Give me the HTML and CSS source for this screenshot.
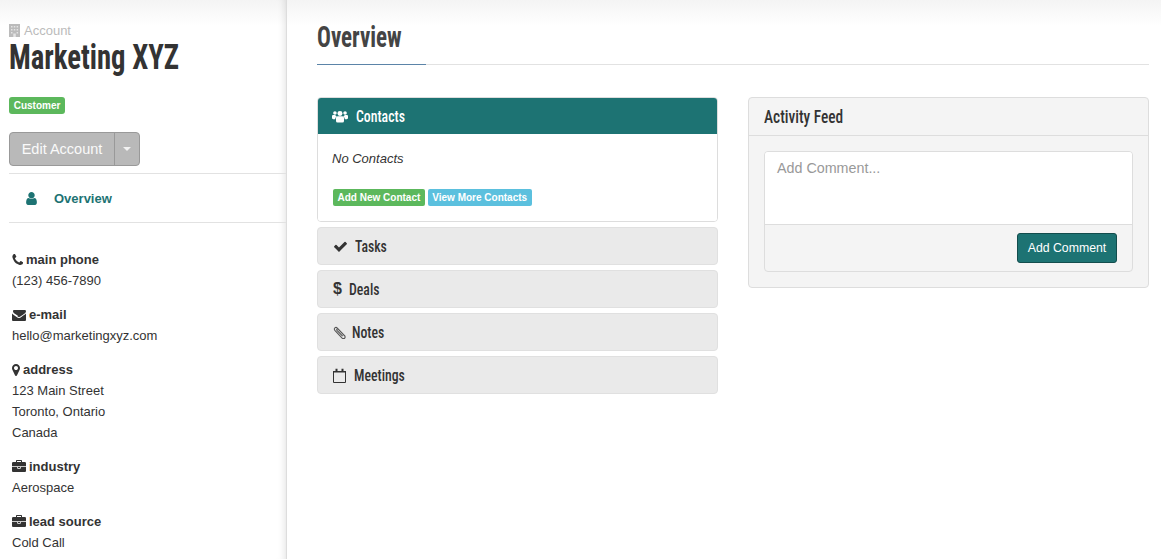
FILE: index.html
```html
<!DOCTYPE html>
<html lang="en">
<head>
<meta charset="utf-8">
<title>Marketing XYZ</title>
<link rel="stylesheet" href="styles.css">
</head>
<body>
<div class="page">
  <aside class="sidebar">
    <div class="account-head">
      <div class="account-label">
        <svg class="ico-building" viewBox="0 0 11 13"><path fill="#bbb" d="M0 0h11v13H0z"/><path fill="#e4e4e4" d="M2 2h1.500v1.500H2zM4.800 2h1.500v1.500H4.800zM7.600 2h1.500v1.500H7.600zM2 5h1.500v1.500H2zM4.800 5h1.500v1.500H4.800zM7.600 5h1.500v1.500H7.600zM2 8h1.500v1.500H2zM7.600 8h1.500v1.500H7.600zM4.300 9.500h2.500V13H4.300z"/></svg>
        <span>Account</span>
      </div>
      <h1 class="account-name"><span class="cond">Marketing XYZ</span></h1>
      <span class="badge">Customer</span>
      <div class="btn-group">
        <span class="btn-edit">Edit Account</span>
        <span class="btn-caret"><i class="caret"></i></span>
      </div>
    </div>
    <nav class="side-nav">
      <svg class="ico-user" viewBox="0 0 1408 1792"><path fill="currentColor" d="M1408 1399q0 109-62.500 187t-150.500 78H341q-88 0-150.500-78T128 1399q0-85 8.500-160.500t31.500-152 58.500-131 94-89T455 832q131 128 313 128t313-128q76 0 134.500 34.500t94 89 58.500 131 31.500 152 8.500 160.500zM1152 512q0 159-112.500 271.500T768 896 496.500 783.500 384 512t112.500-271.500T768 128t271.500 112.500T1152 512z" transform="translate(-64 0)"/></svg>
      <span>Overview</span>
    </nav>
    <dl class="details">
      <div class="detail">
        <dt><svg class="ico" viewBox="0 0 1408 1792"><path d="M1408 1240q0 27-10 70.500t-21 68.500q-21 50-122 106-94 51-186 51-27 0-53-3.500t-57.500-12.500-47-14.500-55.500-20.500-49-18q-98-35-175-83-127-79-264-216T201 904q-48-77-83-175-3-9-18-49t-20.500-55.500-14.500-47T52.500 520 49 467q0-92 51-186 56-101 106-122 25-11 68.500-21t70.500-10q14 0 21 3 18 6 53 76 11 19 30 54t35 63.500 31 53.500q3 4 17.500 25t21.500 35.500 7 28.500q0 20-28.500 50t-62 55-62 53-28.500 46q0 9 5 22.500t8.500 20.500 14 24 11.500 19q76 137 174 235t235 174q2 1 19 11.500t24 14 20.500 8.500 22.500 5q18 0 46-28.500t53-62 55-62 50-28.500q14 0 28.500 7t35.500 21.500 25 17.500q25 15 53.500 31t63.500 35 54 30q70 35 76 53 3 7 3 21z"/></svg>main phone</dt>
        <dd>(123) 456-7890</dd>
      </div>
      <div class="detail">
        <dt><svg class="ico" viewBox="0 0 1792 1792"><path d="M1792 710v794q0 66-47 113t-113 47H160q-66 0-113-47T0 1504V710q44 49 101 87 362 246 497 345 57 42 92.500 65.500t94.500 48 110 24.500h2q51 0 110-24.500t94.500-48 92.500-65.500q170-123 498-345 57-39 100-87zm0-294q0 79-49 151t-122 123q-376 261-468 325-10 7-42.500 30.500t-54 38-52 32.500-57.500 27-50 9h-2q-23 0-50-9t-57.500-27-52-32.500-54-38T767 1016q-91-64-262-182.500T300 691q-62-42-117-115.500T128 439q0-78 41.500-130T160 256h1472q65 0 112.500 47t47.500 113z"/></svg>e-mail</dt>
        <dd>hello@marketingxyz.com</dd>
      </div>
      <div class="detail">
        <dt><svg class="ico" viewBox="0 0 1024 1792"><path d="M768 640q0-106-75-181t-181-75-181 75-75 181 75 181 181 75 181-75 75-181zm256 0q0 109-33 179l-364 774q-16 33-47.500 52t-67.500 19-67.500-19-46.500-52L33 819Q0 749 0 640q0-212 150-362t362-150 362 150 150 362z"/></svg>address</dt>
        <dd>123 Main Street<br>Toronto, Ontario<br>Canada</dd>
      </div>
      <div class="detail">
        <dt><svg class="ico" viewBox="0 0 1792 1792"><path d="M640 256h512V128H640v128zm1152 640v480q0 66-47 113t-113 47H160q-66 0-113-47T0 1376V896h672v160q0 26 19 45t45 19h320q26 0 45-19t19-45V896h672zm-768 0v128H768V896h256zm768-480v384H0V416q0-66 47-113t113-47h352V96q0-40 28-68t68-28h576q40 0 68 28t28 68v160h352q66 0 113 47t47 113z"/></svg>industry</dt>
        <dd>Aerospace</dd>
      </div>
      <div class="detail">
        <dt><svg class="ico" viewBox="0 0 1792 1792"><path d="M640 256h512V128H640v128zm1152 640v480q0 66-47 113t-113 47H160q-66 0-113-47T0 1376V896h672v160q0 26 19 45t45 19h320q26 0 45-19t19-45V896h672zm-768 0v128H768V896h256zm768-480v384H0V416q0-66 47-113t113-47h352V96q0-40 28-68t68-28h576q40 0 68 28t28 68v160h352q66 0 113 47t47 113z"/></svg>lead source</dt>
        <dd>Cold Call</dd>
      </div>
    </dl>
  </aside>
  <main class="main">
    <h2 class="page-title"><span class="cond">Overview</span></h2>
    <div class="columns">
      <section class="stack">
        <div class="panel-open">
          <h3 class="panel-head active">
            <svg class="ico-group" viewBox="0 0 18 14"><g fill="#fff"><circle cx="9" cy="3.500" r="2.800"/><circle cx="3.300" cy="3" r="2"/><circle cx="14.700" cy="3" r="2"/><path d="M4.500 8.500q0-1.800 1.800-1.800h5.400q1.800 0 1.800 1.800V12q0 1.800-1.800 1.800H6.300q-1.800 0-1.800-1.800z"/><path d="M0 6.500q0-1.300 1.300-1.300h2.400q.6 1.400 1.800 1.800-1.800.6-2 3H1.300Q0 10 0 8.800zM18 6.500q0-1.300-1.300-1.300h-2.400q-.6 1.400-1.800 1.800 1.800.6 2 3h2.200Q18 10 18 8.800z"/></g></svg>
            <span class="cond">Contacts</span>
          </h3>
          <div class="panel-body">
            <p class="empty">No Contacts</p>
            <div class="labels">
              <span class="tag tag-green">Add New Contact</span>
              <span class="tag tag-blue">View More Contacts</span>
            </div>
          </div>
        </div>
        <h3 class="panel-head">
          <svg class="ico-head" viewBox="0 0 1792 1792"><path d="M1671 566q0 40-28 68l-724 724-136 136q-28 28-68 28t-68-28l-136-136-362-362q-28-28-28-68t28-68l136-136q28-28 68-28t68 28l294 295 656-657q28-28 68-28t68 28l136 136q28 28 28 68z"/></svg>
          <span class="cond">Tasks</span>
        </h3>
        <h3 class="panel-head">
          <span class="dollar">$</span>
          <span class="cond">Deals</span>
        </h3>
        <h3 class="panel-head">
          <svg class="ico-clip" viewBox="0 0 12 12"><path fill="none" stroke="#555" stroke-width="1" d="M11.300 9.600 4 2C2.500.4.200 2.300 1.700 4l6.500 7c1.800 1.700 4-.3 2.500-2L4.800 2.900C4 2.200 3 3.100 3.700 4l5.200 5.400"/></svg>
          <span class="cond">Notes</span>
        </h3>
        <h3 class="panel-head">
          <svg class="ico-cal" viewBox="0 0 13 15"><path fill="none" stroke="#333" d="M.5 3.500h12v11H.5z"/><path fill="#333" d="M0 3h13v1.500H0zM2.500 .8h2V4h-2zM8.500 .8h2V4h-2z"/></svg>
          <span class="cond">Meetings</span>
        </h3>
      </section>
      <section class="feed">
        <h3 class="feed-head"><span class="cond">Activity Feed</span></h3>
        <div class="feed-body">
          <div class="comment-box">
            <div class="comment-input">Add Comment...</div>
            <div class="comment-foot"><span class="btn-comment">Add Comment</span></div>
          </div>
        </div>
      </section>
    </div>
  </main>
</div>
</body>
</html>
```
FILE: styles.css
```css
* { box-sizing: border-box; }
html, body { margin: 0; height: 100%; }
body {
  font-family: "Liberation Sans", Arial, sans-serif;
  font-size: 13px;
  color: #333;
  overflow: hidden;
  background: linear-gradient(#f4f4f4, #fff 26px) no-repeat;
}
.page { display: flex; height: 559px; }
.cond { display: inline-block; transform: scaleX(.81); transform-origin: left center; white-space: nowrap; }
.sidebar {
  width: 287px;
  flex: none;
  border-right: 1px solid #ddd;
  box-shadow: inset -8px 0 8px -8px rgba(0,0,0,.15);
  overflow: hidden;
}
.account-head { padding: 23px 0 0 9px; height: 173px; }
.account-label { display: flex; align-items: center; gap: 4px; color: #bbb; font-size: 13px; height: 15px; }
.ico-building { width: 11px; height: 13px; }
.account-name {
  margin: 0;
  padding-top: 1px;
  font: bold 35px/38px "Roboto Condensed", "Liberation Sans Narrow", sans-serif;
  color: #333;
  height: 38px;
}
.account-name .cond { transform: scaleX(.82); }
.badge {
  display: block;
  width: 56px;
  height: 17px;
  margin-top: 21px;
  background: #5cb85c;
  border-radius: 3px;
  color: #fff;
  font-size: 10px;
  font-weight: bold;
  line-height: 17px;
  text-align: center;
}
.btn-group {
  display: flex;
  width: 131px;
  height: 34px;
  margin-top: 18px;
  background: #b9b9b9;
  border: 1px solid #999;
  border-radius: 4px;
  color: #fafafa;
  font-size: 14.500px;
  line-height: 32px;
}
.btn-edit { width: 105px; text-align: center; border-right: 1px solid #999; flex: none; }
.btn-caret { flex: 1; display: flex; align-items: center; justify-content: center; }
.caret { display: block; border: 4px solid transparent; border-top-color: #f2f2f2; border-bottom: 0; }
.side-nav {
  margin-left: 9px;
  height: 50px;
  border-top: 1px solid #e2e2e2;
  border-bottom: 1px solid #e2e2e2;
  display: flex;
  align-items: center;
  padding-left: 16px;
  color: #1d7373;
  font-weight: bold;
}
.ico-user { width: 13px; height: 15px; margin-right: 16px; color: #1d7373; }
.details { margin: 0; padding: 26px 0 0 12px; }
.detail { margin-bottom: 13px; }
.detail dt { font-weight: bold; line-height: 21px; display: flex; align-items: center; gap: 3px; }
.detail dd { margin: 0; line-height: 21px; }
.ico { height: 14px; width: auto; max-width: 14px; fill: #333; }
.main { flex: 1; padding: 0 12px 0 30px; min-width: 0; }
.page-title {
  margin: 0;
  height: 65px;
  border-bottom: 1px solid #e2e2e2;
  padding-top: 17px;
  font: bold 29.500px/40px "Roboto Condensed", "Liberation Sans Narrow", sans-serif;
  color: #444;
  position: relative;
}
.page-title .cond { transform: scaleX(.78); }
.page-title::after {
  content: "";
  position: absolute;
  left: 0;
  bottom: -1px;
  width: 109px;
  height: 1px;
  background: #5b84a8;
}
.columns { display: grid; grid-template-columns: 401px 401px; column-gap: 30px; margin-top: 32px; align-items: start; }
.stack { display: flex; flex-direction: column; gap: 5px; }
.panel-head {
  margin: 0;
  height: 38px;
  display: flex;
  align-items: center;
  padding-left: 15px;
  background: #eaeaea;
  border: 1px solid #e0e0e0;
  border-radius: 4px;
  font: 500 17px/1 "Roboto Condensed", "Liberation Sans Narrow", sans-serif;
  color: #333;
}
.panel-open { border: 1px solid #ddd; border-radius: 4px; overflow: hidden; }
.panel-head.active {
  height: 36px;
  background: #1d7373;
  border: 0;
  border-radius: 0;
  color: #fff;
  padding-left: 14px;
}
.ico-group { width: 16px; height: 13px; margin-right: 8px; }
.panel-body { height: 87px; padding: 17px 14px 0; background: #fff; }
.empty { margin: 0; font-style: italic; line-height: 15px; }
.labels { display: flex; gap: 3px; margin-top: 23px; margin-left: 1px; }
.tag { height: 17px; padding: 0 4.500px; border-radius: 2px; color: #fff; font-size: 10px; font-weight: bold; line-height: 17px; }
.tag-green { background: #5cb85c; }
.tag-blue { background: #5bc0de; }
.ico-head { width: 15px; height: 15px; margin-right: 7px; fill: #333; }
.dollar { font: bold 16px "Liberation Sans", sans-serif; width: 9px; margin-right: 7px; }
.ico-clip { width: 13px; height: 13px; margin-right: 6px; }
.ico-cal { width: 13px; height: 15px; margin-right: 8px; }
.feed { background: #f4f4f4; border: 1px solid #ddd; border-radius: 4px; height: 191px; }
.feed-head {
  margin: 0;
  height: 38px;
  padding-left: 15px;
  border-bottom: 1px solid #ddd;
  font: 500 19px/37px "Roboto Condensed", "Liberation Sans Narrow", sans-serif;
  color: #333;
}
.feed-body { padding: 15px; }
.comment-box { border: 1px solid #ddd; border-radius: 4px; height: 121px; overflow: hidden; }
.comment-input { height: 73px; background: #fff; padding: 8px 12px; color: #999; font-size: 14.300px; line-height: 17px; border-bottom: 1px solid #ddd; }
.comment-foot { display: flex; justify-content: flex-end; padding: 8px 15px 0; }
.btn-comment { width: 100px; height: 30px; background: #1d7373; border: 1px solid #134d4d; border-radius: 3px; color: #fff; text-align: center; line-height: 28px; font-size: 12.300px; }
```
